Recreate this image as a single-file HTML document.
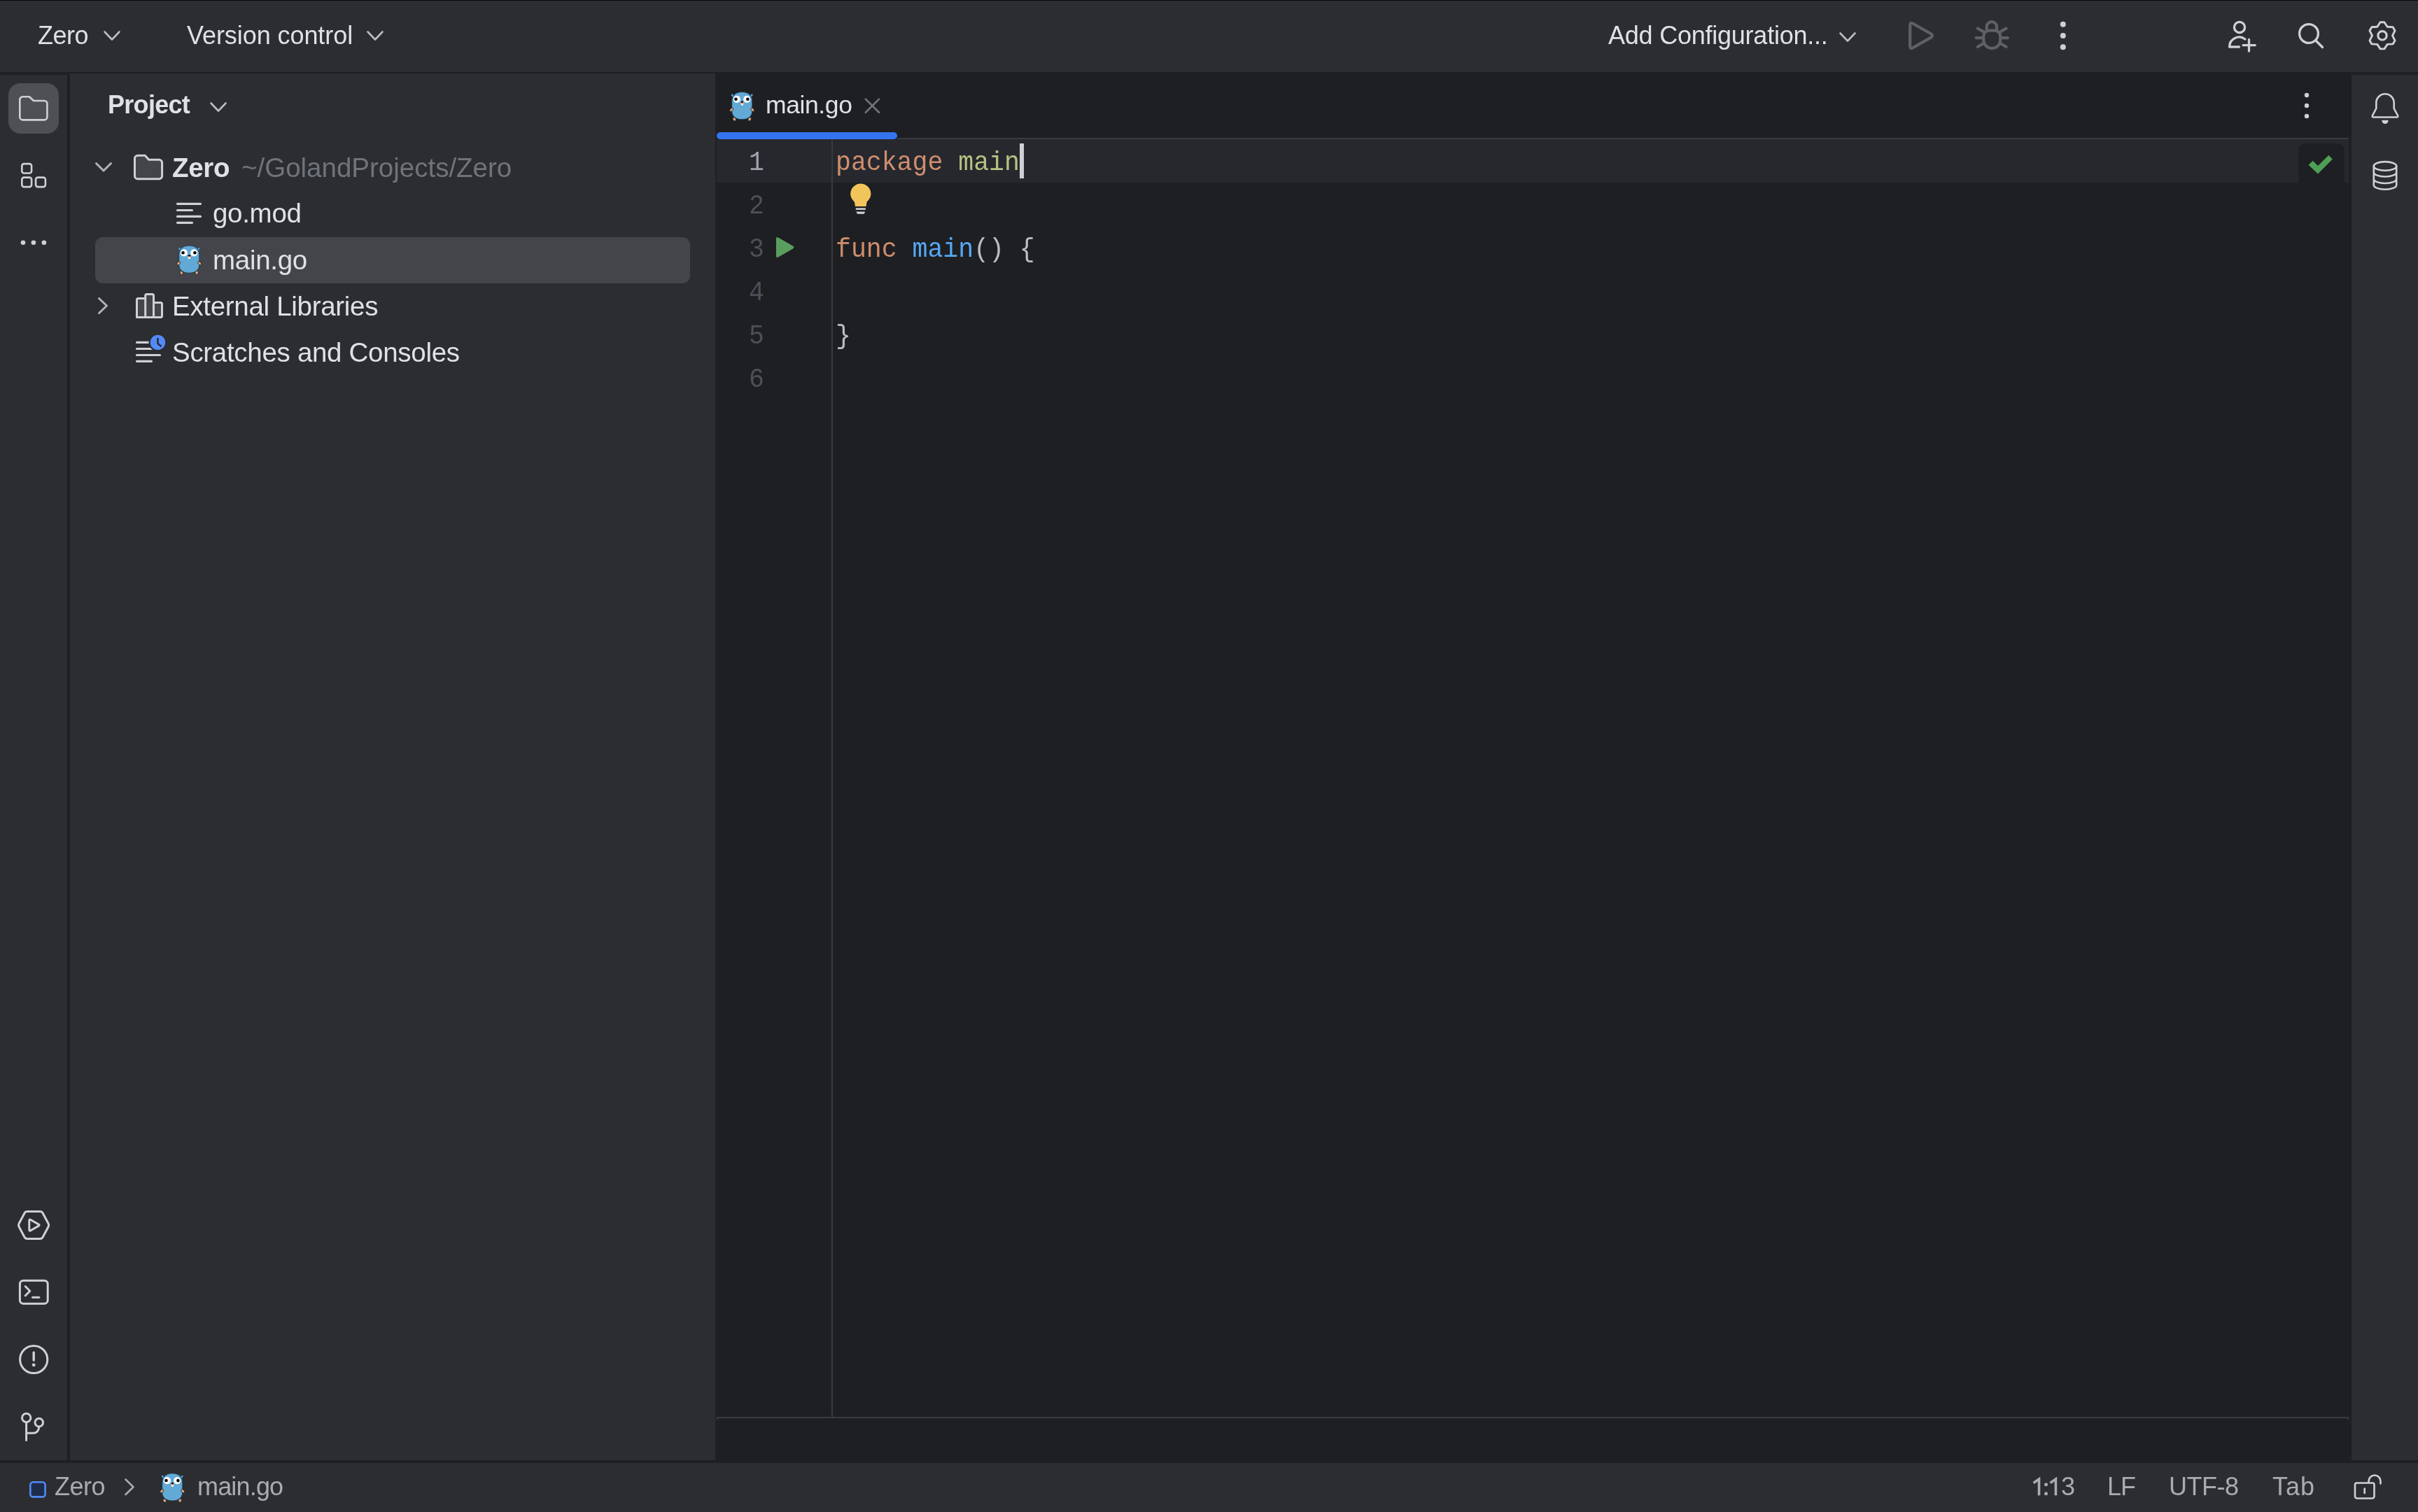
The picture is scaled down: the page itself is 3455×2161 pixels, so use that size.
<!DOCTYPE html>
<html><head><meta charset="utf-8">
<style>
html,body{margin:0;padding:0}
body{width:3455px;height:2161px;background:#1e1f22;position:relative;overflow:hidden;font-family:"Liberation Sans",sans-serif;-webkit-font-smoothing:antialiased}
.t,.m{will-change:transform}
.a{position:absolute}
.t{position:absolute;white-space:pre;line-height:1;color:#dfe1e5;font-family:"Liberation Sans",sans-serif}
.m{position:absolute;white-space:pre;line-height:1;font-family:"Liberation Mono",monospace;font-size:36.5px;transform:scaleY(1.075);transform-origin:0 28px}
svg{position:absolute;left:0;top:0}
</style></head><body>
<!-- panels -->
<div class="a" style="left:0;top:0;width:3455px;height:1px;background:#0a0a0b"></div>
<div class="a" style="left:0;top:1px;width:3455px;height:102px;background:#2b2d30"></div>
<div class="a" style="left:0;top:107px;width:96px;height:1980px;background:#2b2d30"></div>
<div class="a" style="left:100px;top:105px;width:922px;height:1982px;background:#2b2d30"></div>
<div class="a" style="left:3360px;top:107px;width:95px;height:1980px;background:#2b2d30"></div>
<div class="a" style="left:0;top:2091px;width:3455px;height:70px;background:#2b2d30"></div>
<!-- selected stripe button -->
<div class="a" style="left:12px;top:119px;width:72px;height:72px;border-radius:17px;background:#4e5055"></div>
<!-- tree selection -->
<div class="a" style="left:136px;top:339px;width:850px;height:66px;border-radius:11px;background:#43454a"></div>
<!-- editor: caret row, tab border, lines -->
<div class="a" style="left:1024px;top:199px;width:2332px;height:62px;background:#26282e"></div>
<div class="a" style="left:1282px;top:197px;width:2074px;height:2px;background:#393b40"></div>
<div class="a" style="left:1188px;top:199px;width:2px;height:1826px;background:#393b40"></div>
<div class="a" style="left:1024px;top:2025px;width:2332px;height:2px;background:#393b40"></div>
<div class="a" style="left:1024px;top:2025px;width:2px;height:4px;background:#393b40"></div>
<div class="a" style="left:3354px;top:2025px;width:2px;height:4px;background:#393b40"></div>
<div class="a" style="left:1024px;top:189px;width:258px;height:10px;border-radius:5px;background:#3574f0"></div>
<div class="a" style="left:3284px;top:205px;width:66px;height:56px;border-radius:10px 10px 0 0;background:#1e1f22"></div>
<div class="a" style="left:1457px;top:205px;width:6px;height:50px;background:#ced0d6"></div>

<!-- title bar text -->
<div class="t" style="left:54px;top:33px;font-size:36px;letter-spacing:-0.5px">Zero</div>
<div class="t" style="left:267px;top:33px;font-size:36px;letter-spacing:-0.07px">Version control</div>
<div class="t" style="left:2298px;top:33px;font-size:36px;letter-spacing:-0.23px">Add Configuration...</div>

<!-- project header -->
<div class="t" style="left:154px;top:132px;font-size:36px;font-weight:700;letter-spacing:-0.7px">Project</div>

<!-- tree -->
<div class="t" style="left:246px;top:221px;font-size:38.5px;font-weight:700;letter-spacing:-0.3px">Zero</div>
<div class="t" style="left:345px;top:221px;font-size:38.5px;color:#6f737a;letter-spacing:0px">~/GolandProjects/Zero</div>
<div class="t" style="left:304px;top:286px;font-size:38.5px;letter-spacing:-0.3px">go.mod</div>
<div class="t" style="left:304px;top:353px;font-size:38.5px;letter-spacing:-0.3px">main.go</div>
<div class="t" style="left:246px;top:419px;font-size:38.5px;letter-spacing:-0.3px">External Libraries</div>
<div class="t" style="left:246px;top:485px;font-size:38.5px;letter-spacing:-0.3px">Scratches and Consoles</div>

<!-- tab -->
<div class="t" style="left:1094px;top:133px;font-size:35.5px;letter-spacing:-0.4px">main.go</div>

<!-- line numbers -->
<div class="m" style="left:1069.5px;top:216px;color:#a1a3ab">1</div>
<div class="m" style="left:1069.5px;top:278px;color:#4b5059">2</div>
<div class="m" style="left:1069.5px;top:340.4px;color:#4b5059">3</div>
<div class="m" style="left:1069.5px;top:402.3px;color:#4b5059">4</div>
<div class="m" style="left:1069.5px;top:464.2px;color:#4b5059">5</div>
<div class="m" style="left:1069.5px;top:526.1px;color:#4b5059">6</div>

<!-- code -->
<div class="m" style="left:1194px;top:216px;color:#bcbec4"><span style="color:#cf8e6d">package</span> <span style="color:#b4c381">main</span></div>
<div class="m" style="left:1194px;top:340.4px;color:#bcbec4"><span style="color:#cf8e6d">func</span> <span style="color:#56a8f5">main</span>() {</div>
<div class="m" style="left:1194px;top:464.2px;color:#bcbec4">}</div>

<!-- status bar -->
<div class="t" style="left:78px;top:2107px;font-size:36px;color:#a8abb1;letter-spacing:-0.5px">Zero</div>
<div class="t" style="left:282px;top:2107px;font-size:36px;color:#a8abb1;letter-spacing:-0.83px">main.go</div>
<div class="t" style="left:2944.6px;top:2107px;font-size:36px;color:#a8abb1">3</div>
<div class="t" style="left:3011.1px;top:2107px;font-size:36px;color:#a8abb1">L</div>
<div class="t" style="left:3030.2px;top:2107px;font-size:36px;color:#a8abb1">F</div>
<div class="t" style="left:3099px;top:2107px;font-size:36px;color:#a8abb1;letter-spacing:-0.5px">UTF-8</div>
<div class="t" style="left:3247px;top:2107px;font-size:36px;color:#a8abb1;letter-spacing:1px">Tab</div>

<svg width="3455" height="2161" viewBox="0 0 3455 2161">
<defs>
<symbol id="gopher" viewBox="0 0 40 44" overflow="visible">
  <path d="M6.4 5.8 L3.6 2.6 L1.8 4.2 L4.3 8.2 Z" fill="#62a9d6" stroke="#1b3a4a" stroke-width="0.8"/>
  <path d="M28.9 5.8 L31.7 2.6 L33.5 4.2 L31 8.2 Z" fill="#62a9d6" stroke="#1b3a4a" stroke-width="0.8"/>
  <ellipse cx="6.7" cy="39.2" rx="2.7" ry="2.1" transform="rotate(60 6.7 39.2)" fill="#e0a98a" stroke="#1a1a1a" stroke-width="0.8"/>
  <ellipse cx="28.6" cy="39.1" rx="2.7" ry="2.1" transform="rotate(-60 28.6 39.1)" fill="#e0a98a" stroke="#1a1a1a" stroke-width="0.8"/>
  <path d="M17.65 0.3 C26 0.3 32.2 4.5 32.2 14 L32.2 27 C32.2 35.5 26 39.5 17.65 39.5 C9.3 39.5 3.1 35.5 3.1 27 L3.1 14 C3.1 4.5 9.3 0.3 17.65 0.3 Z" fill="#62a9d6" stroke="#1b3a4a" stroke-width="0.9"/>
  <ellipse cx="2.6" cy="25.6" rx="3.0" ry="1.9" transform="rotate(-45 2.6 25.6)" fill="#e0a98a" stroke="#1a1a1a" stroke-width="0.8"/>
  <ellipse cx="32.6" cy="25.6" rx="3.0" ry="1.9" transform="rotate(45 32.6 25.6)" fill="#e0a98a" stroke="#1a1a1a" stroke-width="0.8"/>
  <circle cx="10.3" cy="10.7" r="5.1" fill="#fff"/>
  <circle cx="24.6" cy="10.7" r="5.1" fill="#fff"/>
  <circle cx="8.9" cy="10.5" r="2.3" fill="#000"/>
  <circle cx="25.8" cy="10.6" r="2.3" fill="#000"/>
  <ellipse cx="17.8" cy="15.9" rx="2.6" ry="2.2" fill="#e0a98a"/>
  <ellipse cx="17.8" cy="14.6" rx="1.6" ry="1.3" fill="#000"/>
  <rect x="16.3" y="17.3" width="3" height="2" fill="#fff"/>
</symbol>
</defs>
<g fill="none" stroke="#ced0d6" stroke-width="2.6" stroke-linecap="round" stroke-linejoin="round">
  <!-- left stripe top icons -->
  <path d="M28.3 142.5 a4.2 4.2 0 0 1 4.2 -4.2 H42 l6 5.7 H63.2 a4.2 4.2 0 0 1 4.2 4.2 V167.2 a4.2 4.2 0 0 1 -4.2 4.2 H32.5 a4.2 4.2 0 0 1 -4.2 -4.2 Z"/>
  <rect x="31.3" y="234.1" width="13.8" height="13.4" rx="3"/>
  <rect x="31.3" y="253.6" width="13.8" height="13.5" rx="3"/>
  <rect x="51.1" y="253.6" width="13.8" height="13.5" rx="3"/>
  <!-- left stripe bottom icons -->
  <g stroke-width="3">
  <path d="M27.1 1748.8 L35.1 1733.7 Q36.3 1731.5 38.8 1731.5 L57.4 1731.5 Q59.9 1731.5 61.1 1733.7 L69.1 1748.8 Q70.3 1751.0 69.1 1753.2 L61.1 1768.3 Q59.9 1770.5 57.4 1770.5 L38.8 1770.5 Q36.3 1770.5 35.1 1768.3 L27.1 1753.2 Q25.9 1751.0 27.1 1748.8 Z"/>
  <path d="M43.7 1743.3 L55.1 1749.9 Q57.0 1751.0 55.1 1752.1 L43.7 1758.7 Q41.8 1759.8 41.8 1757.6 L41.8 1744.4 Q41.8 1742.2 43.7 1743.3 Z"/>
  <rect x="28.4" y="1830.2" width="39.8" height="33" rx="5"/>
  <path d="M36.2 1838.5 L42.8 1845.2 L36.2 1851.8"/>
  <path d="M46.5 1854.2 H55.8"/>
  <circle cx="48.2" cy="1943" r="19.6"/>
  <path d="M48.2 1933 V1944" stroke-width="3.4"/>
  <path d="M37.6 2032.6 V2058.6 M37.6 2048.2 H47.5 C52.3 2048.2 55.8 2044.5 55.8 2039"/>
  <circle cx="37.7" cy="2026.4" r="6.2"/>
  <circle cx="55.8" cy="2033.1" r="5.8"/>
  </g>
  <!-- right stripe -->
  <path d="M3395.3 155 V147 A12.7 12.7 0 0 1 3420.7 147 V155 L3426 165 Q3427 167.5 3424.5 167.5 H3391.5 Q3389 167.5 3390 165 Z"/>
  <ellipse cx="3408" cy="237.4" rx="16.2" ry="6.3"/>
  <path d="M3391.8 237.4 V264.4 A16.2 6.3 0 0 0 3424.2 264.4 V237.4 M3391.8 246.2 A16.2 6.3 0 0 0 3424.2 246.2 M3391.8 255.7 A16.2 6.3 0 0 0 3424.2 255.7"/>
  <!-- top toolbar right icons -->
  <g stroke-width="3.3">
  <circle cx="3200" cy="39" r="7.6"/>
  <path d="M3199.5 67 H3185.5 A14 14 0 0 1 3208 56"/>
  <path d="M3213.5 56.5 V73 M3205 64.6 H3222.3"/>
  <circle cx="3299" cy="48" r="13.4"/>
  <path d="M3309.5 58.5 L3318.5 67.5"/>
  <path stroke-width="2.9" d="M3401.1 31.8 L3406.9 31.8 L3411.2 38.3 L3419.1 38.8 L3422.0 43.8 L3418.5 50.9 L3422.0 57.9 L3419.1 62.9 L3411.2 63.4 L3406.9 69.9 L3401.1 69.9 L3396.8 63.4 L3388.9 62.9 L3386.0 57.9 L3389.5 50.9 L3386.0 43.8 L3388.9 38.8 L3396.8 38.3 Z"/>
  <circle cx="3404" cy="50.85" r="6.2" stroke-width="3.1"/>
  </g>
  <!-- disabled run / debug -->
  <g stroke="#5e6064" stroke-width="4.2">
  <path d="M2729.2 35.5 Q2729.2 31.5 2733 33.5 L2759.5 48.5 Q2762.5 50.9 2759.5 53.3 L2733 68.3 Q2729.2 70.3 2729.2 66.3 Z"/>
  <path d="M2834.2 51.7 A8 8 0 0 1 2842.2 43.7 H2850.2 A8 8 0 0 1 2858.2 51.7 V57.1 A12 12 0 0 1 2834.2 57.1 Z"/>
  <path d="M2838.7 43.7 V38.4 A7.2 7.2 0 0 1 2853.1 38.4 V43.7"/>
  <path d="M2834.3 45.3 L2825.8 40.6 M2858.1 45.3 L2866.6 40.6 M2832.5 54.1 H2823.6 M2859.9 54.1 H2868.8 M2834.3 61.9 L2825.8 67 M2858.1 61.9 L2866.6 67"/>
  </g>
  <!-- tree icons -->
  <g stroke="#aeb2ba" stroke-width="3">
  <path d="M137.5 233.5 L148 244 L158.5 233.5"/>
  <path d="M141.5 426.5 L152.5 437 L141.5 447.5"/>
  </g>
  <g stroke-width="3">
  <path d="M192.5 226.5 a4.3 4.3 0 0 1 4.3 -4.3 H207.3 l5.3 6 H227.3 a4.3 4.3 0 0 1 4.3 4.3 V251.4 a4.3 4.3 0 0 1 -4.3 4.3 H196.8 a4.3 4.3 0 0 1 -4.3 -4.3 Z" fill="#43454a"/>
  <path d="M253.5 291.3 H286.5 M253.5 300.5 H274.5 M253.5 309.4 H286.5 M253.5 318.3 H274.5" stroke-width="3.2"/>
  <path d="M195.5 453.5 V428.5 a2 2 0 0 1 2 -2 H207.7 V422.5 a2 2 0 0 1 2 -2 H217.5 a2 2 0 0 1 2 2 V432.5 H229.5 a2 2 0 0 1 2 2 V451.5 a2 2 0 0 1 -2 2 Z" fill="#43454a"/>
  <path d="M207.7 426.5 V453.5 M219.5 432.5 V453.5"/>
  <path d="M195.5 489.4 H213 M195.5 498.5 H217 M195.5 507.5 H228.5 M195.5 516.3 H216.5" stroke-width="3.2"/>
  </g>
  <circle cx="225.5" cy="489.4" r="13" fill="#2b2d30" stroke="none"/>
  <circle cx="225.5" cy="489.4" r="10.7" fill="#548af7" stroke="none"/>
  <path d="M225.5 484 V491 L229.8 494.5" stroke="#2b2d30" stroke-width="2.6"/>
  <!-- tab close -->
  <path d="M1236.8 141.6 L1256 160.8 M1256 141.6 L1236.8 160.8" stroke="#6f737a" stroke-width="2.7" stroke-linecap="round"/>
  <!-- status bar -->
  <rect x="43.3" y="2118.2" width="21.3" height="21.2" rx="4" fill="#1f2d4d" stroke="#548af7" stroke-width="2.6"/>
  <path d="M179.5 2114.5 L190.5 2125.3 L179.5 2136" stroke="#a8abb1" stroke-width="2.6"/>
  <path d="M3365 2122 a2.5 2.5 0 0 1 2.5 -2.5 H3390 a2.5 2.5 0 0 1 2.5 2.5 V2138.5 a3 3 0 0 1 -3 3 H3368 a3 3 0 0 1 -3 -3 Z M3384.5 2119.5 V2117 A8.5 8.5 0 0 1 3401.5 2117 V2120.5 M3378.7 2127.5 V2134"/>
</g>
<!-- dots -->
<g fill="#ced0d6">
  <circle cx="33" cy="346.8" r="3.3"/><circle cx="47.9" cy="346.8" r="3.3"/><circle cx="62.9" cy="346.8" r="3.3"/>
  <circle cx="2947.8" cy="34.7" r="4"/><circle cx="2947.8" cy="51.1" r="4"/><circle cx="2947.8" cy="67.3" r="4"/>
  <circle cx="3296" cy="136" r="3.2"/><circle cx="3296" cy="151" r="3.2"/><circle cx="3296" cy="166" r="3.2"/>
  <circle cx="48.2" cy="1950.8" r="2.4"/>
  <path d="M3404.2 172.5 H3411.8 A3.8 3.8 0 0 1 3404.2 172.5 Z" stroke="#ced0d6" stroke-width="1.5"/>
</g>
<!-- chevrons in title bar -->
<g fill="none" stroke="#b9bdc4" stroke-width="2.6" stroke-linecap="round" stroke-linejoin="round">
  <path d="M149.5 45.5 L160 56.5 L170.5 45.5"/>
  <path d="M525.5 45.5 L536 56.5 L546.5 45.5"/>
  <path d="M2629.5 47.5 L2640 58.5 L2650.5 47.5"/>
  <path d="M301.5 147.5 L312 158.5 L322.5 147.5"/>
</g>
<!-- gutter icons -->
<path d="M1109 341 Q1109 338 1112 339.5 L1133 351.5 Q1135.5 353.5 1133 355.5 L1112 367.5 Q1109 369 1109 366 Z" fill="#5a9e5f"/>
<path d="M1229.8 262.5 A14.6 14.6 0 0 1 1244.4 277 C1244.4 283 1240.5 286 1238.5 289 L1237.5 295 H1222 L1221 289 C1219 286 1215.2 283 1215.2 277 A14.6 14.6 0 0 1 1229.8 262.5 Z" fill="#f2c55c"/>
<path d="M1222.8 298.6 H1236.8" stroke="#ced0d6" stroke-width="2.6" stroke-linecap="butt"/><path d="M1223.3 302.6 H1236.3 L1234.5 305.8 H1225.1 Z" fill="#ced0d6"/>
<!-- check -->
<path d="M3298.6 235.8 L3304.7 229.8 L3312 237.1 L3327.4 221.8 L3332.8 227.4 L3312 248.6 Z" fill="#4e9f56"/>
<!-- gophers -->
<use href="#gopher" x="252.6" y="350.7" width="40" height="44"/>
<use href="#gopher" x="1042.6" y="131.2" width="40" height="44"/>
<use href="#gopher" x="228.6" y="2105.5" width="40" height="44"/>
<g fill="none" stroke="#a8abb1" stroke-width="3.6" stroke-linejoin="miter" stroke-linecap="butt">
  <path d="M2913.5 2137.2 V2114 L2905.6 2119.4"/>
  <path d="M2937.4 2137.2 V2114 L2929.5 2119.4"/>
</g>
<g fill="#a8abb1"><circle cx="2923.5" cy="2121.7" r="2.5"/><circle cx="2923.5" cy="2134.7" r="2.5"/></g>
</svg>
</body></html>
